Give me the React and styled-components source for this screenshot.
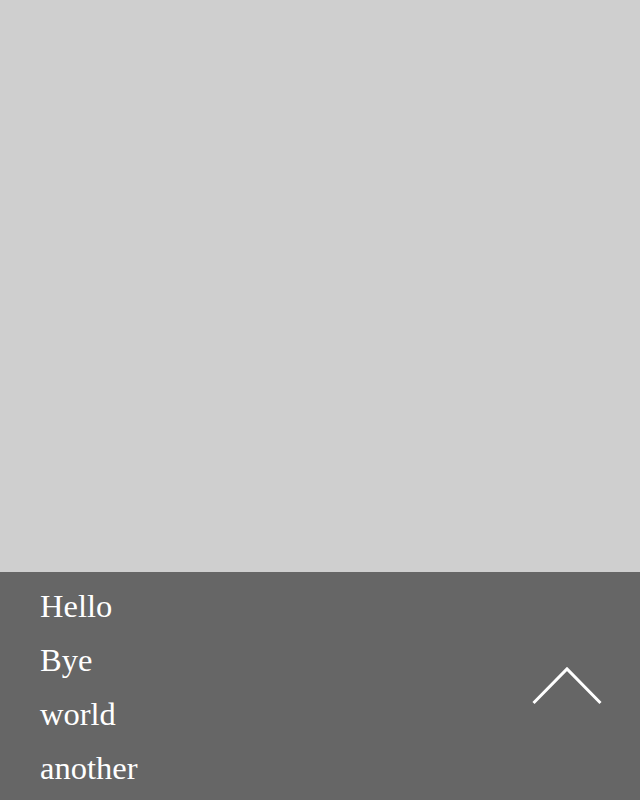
import React from "react";
import styled, { createGlobalStyle } from "styled-components";

const Global = createGlobalStyle`
  html, body { margin: 0; padding: 0; }
  body { background: #cfcfcf; }
`;

const Page = styled.div`
  display: flex;
  flex-direction: column;
  height: 800px;
  width: 640px;
  overflow: hidden;
`;

const Canvas = styled.div`
  flex: 1;
  background: #cfcfcf;
`;

const Bar = styled.div`
  height: 228px;
  background: #666666;
  display: flex;
  align-items: center;
  justify-content: space-between;
  padding: 0 38px 0 40px;
  box-sizing: border-box;
`;

const List = styled.ul`
  list-style: none;
  margin: 0;
  padding: 0;
  align-self: flex-start;
  padding-top: 7px;
`;

const Item = styled.li`
  font-family: "Liberation Serif", "DejaVu Serif", serif;
  font-size: 32.5px;
  line-height: 54px;
  color: #ffffff;
`;

const Toggle = styled.button`
  background: none;
  border: none;
  padding: 0;
  margin: 0;
  display: flex;
  cursor: pointer;
`;

export default function App() {
  const items = ["Hello", "Bye", "world", "another"];
  return (
    <>
      <Global />
      <Page>
        <Canvas />
        <Bar>
          <List>
            {items.map((t) => (
              <Item key={t}>{t}</Item>
            ))}
          </List>
          <Toggle aria-label="expand">
            <svg width="70" height="40" viewBox="0 0 70 40">
              <polyline
                points="1.5,37 35,3 68.5,37"
                fill="none"
                stroke="#ffffff"
                strokeWidth="3"
              />
            </svg>
          </Toggle>
        </Bar>
      </Page>
    </>
  );
}
